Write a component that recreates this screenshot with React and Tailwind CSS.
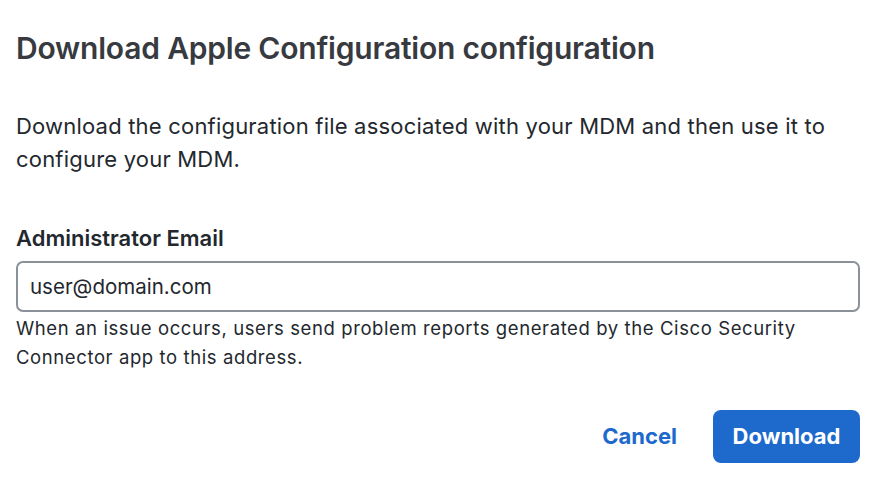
import React, { useState } from "react";

export default function App() {
  const [email, setEmail] = useState("user@domain.com");

  return (
    <div
      className="w-[888px] h-[494px] bg-white pl-4 pr-7 pt-[28px] text-[#23282e]"
      style={{ fontFamily: "Inter, 'Noto Sans', sans-serif" }}
    >
      <h2 className="text-[30px] leading-[40px] font-semibold text-[#373a3f] tracking-[-0.2px]">
        Download Apple Configuration configuration
      </h2>

      <p className="mt-[42px] text-[22px] leading-[33px] tracking-[0.2px] text-[#23282e]">
        Download the configuration file associated with your MDM and then use it to configure your MDM.
      </p>

      <div className="mt-[48px]">
        <label className="block text-[22px] leading-[28px] font-semibold text-[#23282e]">
          Administrator Email
        </label>
        <input
          type="text"
          value={email}
          onChange={(e) => setEmail(e.target.value)}
          className="mt-[9px] w-full h-[51px] px-[12px] rounded-[7px] border-2 border-[#8a9199] text-[20.5px] text-[#23282e] outline-none"
        />
        <p className="mt-[2px] max-w-[820px] text-[18.5px] leading-[29px] tracking-[0.6px] text-[#23282e]">
          When an issue occurs, users send problem reports generated by the Cisco Security Connector app to this address.
        </p>
      </div>

      <div className="mt-[38px] flex justify-end items-center gap-[36px]">
        <button type="button" className="text-[22px] font-bold text-[#1d69cc]">
          Cancel
        </button>
        <button
          type="button"
          className="w-[147px] h-[53px] rounded-[8px] bg-[#1d69cc] text-white text-[22px] font-bold"
        >
          Download
        </button>
      </div>
    </div>
  );
}
